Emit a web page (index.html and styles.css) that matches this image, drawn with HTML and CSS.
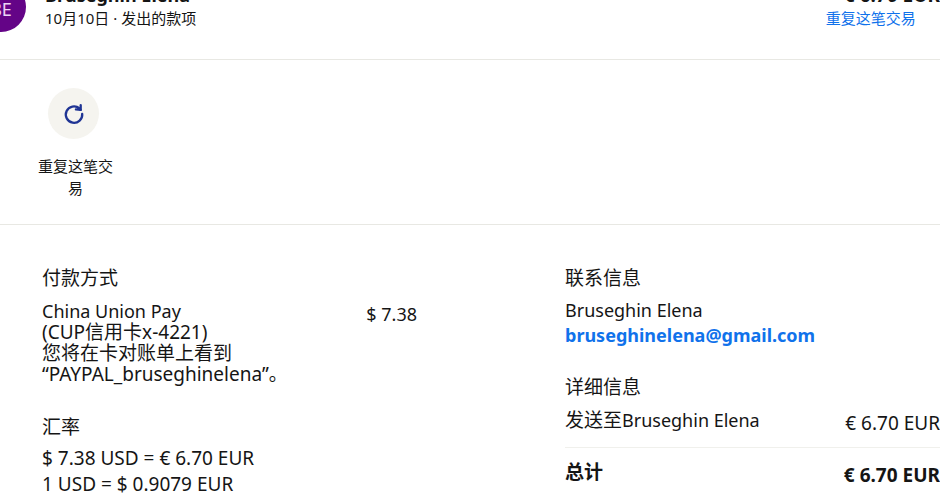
FILE: index.html
```
<!DOCTYPE html>
<html lang="zh-CN">
<head>
<meta charset="utf-8">
<meta name="viewport" content="width=device-width, initial-scale=1">
<title>交易详情</title>
<link rel="stylesheet" href="styles.css">
</head>
<body>
<main>
  <header class="summary">
    <div class="avatar">BE</div>
    <div class="who">
      <div class="name">Bruseghin Elena</div>
      <div class="meta">10月10日 · 发出的款项</div>
    </div>
    <div class="sum">
      <div class="name">€ 6.70 EUR</div>
      <a class="repeat-link" href="#repeat">重复这笔交易</a>
    </div>
  </header>
  <section class="actions">
    <button class="action" type="button" id="repeat">
      <span class="action-icon">
        <svg viewBox="0 0 24 24" width="24" height="24" fill="none" stroke="#1f3494" stroke-width="2.3" stroke-linecap="round" stroke-linejoin="round" aria-hidden="true">
          <path d="M20.2 11.8A8.2 8.2 0 1 1 17.4 6.4"/>
          <path d="M18.7 3.2V7.9L13.9 7.3"/>
          <path d="M16.2 6L18.7 7.9"/>
        </svg>
      </span>
      <span class="action-label">重复这笔交易</span>
    </button>
  </section>
  <div class="details">
    <div class="column">
      <section>
        <h2>付款方式</h2>
        <div class="row funding">
          <p><span class="label">China Union Pay</span><br>(CUP信用卡x-4221)<br>您将在卡对账单上看到<br>“PAYPAL_bruseghinelena”。</p>
          <span class="amount label">$ 7.38</span>
        </div>
      </section>
      <section class="rate">
        <h2>汇率</h2>
        <p>$ 7.38 USD = € 6.70 EUR<br>1 USD = $ 0.9079 EUR</p>
      </section>
    </div>
    <div class="column">
      <section class="contact">
        <h2>联系信息</h2>
        <p class="label">Bruseghin Elena</p>
        <a class="email label" href="mailto:bruseghinelena@gmail.com">bruseghinelena@gmail.com</a>
      </section>
      <section>
        <h2>详细信息</h2>
        <div class="row sent">
          <span>发送至<span class="label">Bruseghin Elena</span></span>
          <span class="amount">€ 6.70 EUR</span>
        </div>
        <div class="row total">
          <span>总计</span>
          <span class="amount">€ 6.70 EUR</span>
        </div>
      </section>
    </div>
  </div>
</main>
</body>
</html>
```
FILE: styles.css
```
* { box-sizing: border-box; }

body {
  margin: 0;
  overflow: hidden;
  background: #fff;
  color: #151515;
  font: 19px/25px "Noto Sans", "Noto Sans CJK SC", sans-serif;
}

h2, p { margin: 0; }

h2 {
  font-size: 19px;
  font-weight: 400;
  line-height: 26px;
}

a { color: #1072eb; text-decoration: none; }

.label { font-size: 18px; }

/* The header is scrolled partly out of view. */
.summary {
  display: flex;
  height: 78px;
  margin: -18px 0 0 -24px;
  border-bottom: 1px solid #e8e8e3;
}

.avatar {
  flex: none;
  width: 50px;
  height: 50px;
  border-radius: 50%;
  background: #640487;
  color: #ecd4f4;
  font-size: 18px;
  line-height: 54px;
  text-align: center;
}

.who { flex: 1; margin-left: 19px; }

.name {
  font-size: 18px;
  font-weight: 700;
  line-height: 26px;
}

.meta, .repeat-link {
  display: block;
  font-size: 15px;
  line-height: 20px;
}

.sum { white-space: nowrap; }

.sum .name { margin-left: 18px; font-size: 19px; }

.actions {
  padding: 28px 38px 25px;
  border-bottom: 1px solid #e8e8e3;
}

.action {
  display: flex;
  flex-direction: column;
  gap: 16px;
  width: 75px;
  padding: 0;
  border: 0;
  background: none;
  color: inherit;
  font: inherit;
  font-size: 15px;
  line-height: 22px;
}

.action-icon {
  display: flex;
  align-items: center;
  justify-content: center;
  width: 51px;
  height: 51px;
  margin-left: 10px;
  border-radius: 50%;
  background: #f5f4ef;
}

.details {
  display: grid;
  grid-template-columns: 1fr 1fr;
  gap: 148px;
  padding: 40px 0 0 42px;
}

.row {
  display: flex;
  justify-content: space-between;
}

.amount { padding-top: 3px; white-space: nowrap; }

.funding {
  margin-top: 10px;
  line-height: 21px;
}

.rate { margin-top: 29px; }

.rate p { margin-top: 5px; line-height: 26px; }

.contact { margin-bottom: 26px; }

.contact p { margin-top: 7px; }

.email { display: block; font-weight: 700; }

.sent { margin-top: 8px; }

.total {
  margin-top: 11px;
  padding-top: 12px;
  border-top: 1px solid #f0f0ec;
  font-weight: 700;
}
```
